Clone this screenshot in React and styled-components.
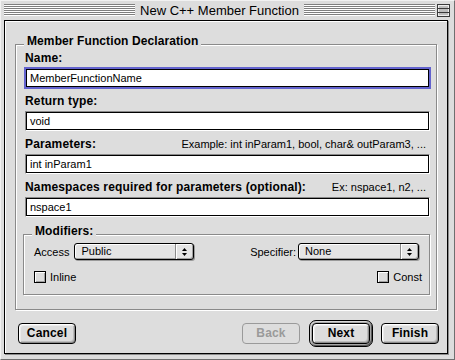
import React from 'react';
import styled, { createGlobalStyle, css } from 'styled-components';

const Global = createGlobalStyle`
  html, body { margin: 0; padding: 0; background: #dddddd; }
  * { box-sizing: border-box; }
`;

const SYS = `"Liberation Sans", Arial, sans-serif`;

const Window = styled.div`
  width: 455px;
  height: 360px;
  background: #dddddd;
  border: 1px solid;
  border-color: #f2f2f2 #6f6f6f #6f6f6f #f2f2f2;
  display: flex;
  flex-direction: column;
  font-family: ${SYS};
  color: #000;
  overflow: hidden;
`;

const TitleBar = styled.div`
  height: 19px;
  display: flex;
  align-items: flex-start;
  padding: 3px 4px 0 3px;
`;

const Stripes = styled.div`
  flex: 1;
  height: 12px;
  display: flex;
  justify-content: center;
  background: repeating-linear-gradient(to bottom, #7f7f7f 0 1px, #ffffff 1px 2px);
`;

const Title = styled.div`
  background: #dddddd;
  padding: 0 5px;
  font-size: 13px;
  line-height: 14px;
  height: 12px;
  white-space: nowrap;
`;

const ZoomBox = styled.svg`
  margin-left: 2px;
  display: block;
`;

const Content = styled.div`
  margin: 0 6px 0 3px;
  border: 1px solid #000;
  box-shadow: inset 1px 1px 0 #fff, 1px 1px 0 #8c8c8c;
  padding: 0 0 7px 0;
  display: flex;
  flex-direction: column;
`;

const Group = styled.div`
  margin: ${(p) => p.$margin};
  padding: ${(p) => p.$padding};
  border: 1px solid #8a8a8a;
  box-shadow: inset 1px 1px 0 #fff, 1px 1px 0 #fff;
  display: flex;
  flex-direction: column;
`;

const GroupTitle = styled.div`
  align-self: flex-start;
  margin: -11px 0 0 ${(p) => p.$x}px;
  padding: 0 3px;
  background: #dddddd;
  font-weight: bold;
  font-size: 12px;
  line-height: 14px;
  height: 14px;
  letter-spacing: 0.1px;
  white-space: nowrap;
`;

const LabelRow = styled.div`
  margin-top: ${(p) => p.$top}px;
  height: 14px;
  display: flex;
  justify-content: space-between;
  align-items: baseline;
  padding-right: 4px;
`;

const Label = styled.span`
  font-weight: bold;
  font-size: 12px;
  line-height: 14px;
  letter-spacing: 0.15px;
  white-space: nowrap;
`;

const Hint = styled.span`
  font-size: 11px;
  line-height: 14px;
  white-space: nowrap;
`;

const Field = styled.div`
  margin-top: 3px;
  height: 20px;
  border: 1px solid;
  border-color: #8a8a8a #ffffff #ffffff #8a8a8a;
  ${(p) =>
    p.$focus &&
    css`
      border-color: #6363ce;
      box-shadow: 0 0 0 1px #6363ce;
    `}
`;

const FieldText = styled.div`
  height: 100%;
  border: 1px solid #000;
  background: #fff;
  padding: 0 3px;
  font-size: 11px;
  line-height: 16px;
  white-space: nowrap;
  overflow: hidden;
`;

const Row = styled.div`
  margin-top: ${(p) => p.$top}px;
  padding: 0 ${(p) => p.$pr}px 0 ${(p) => p.$pl}px;
  display: flex;
  align-items: center;
  justify-content: space-between;
`;

const Pair = styled.div`
  display: flex;
  align-items: center;
  gap: ${(p) => p.$gap}px;
`;

const SmallText = styled.span`
  font-size: 11px;
  line-height: 14px;
  white-space: nowrap;
`;

const Popup = styled.div`
  width: ${(p) => p.$w}px;
  height: 17px;
  border: 1px solid #000;
  border-radius: 3px;
  background: #e4e4e4;
  box-shadow: inset 1px 1px 0 #fff, inset -1px -1px 0 #a0a0a0, 1px 1px 0 #9a9a9a;
  display: flex;
  align-items: stretch;
`;

const PopupText = styled.div`
  flex: 1;
  padding-left: 6px;
  font-size: 11px;
  line-height: 15px;
  white-space: nowrap;
`;

const PopupArrow = styled.div`
  width: 18px;
  border-left: 1px solid #8a8a8a;
  box-shadow: inset 1px 0 0 #fff;
  display: flex;
  align-items: center;
  justify-content: center;
`;

const CheckBox = styled.span`
  width: 12px;
  height: 12px;
  border: 1px solid #000;
  background: #dddddd;
  box-shadow: inset 1px 1px 0 #fff, inset -1px -1px 0 #a0a0a0;
`;

const ButtonRow = styled.div`
  margin-top: 10px;
  height: 26px;
  padding: 0 8px 0 13px;
  display: flex;
  align-items: center;
`;

const Spacer = styled.div`
  flex: 1;
`;

const Button = styled.div`
  width: 58px;
  height: 21px;
  border: 1px solid #000;
  border-radius: 4px;
  background: #dddddd;
  box-shadow: inset 1px 1px 0 #fff, inset -1px -1px 0 #8c8c8c, inset 2px 2px 0 #ececec,
    inset -2px -2px 0 #bcbcbc;
  display: flex;
  align-items: center;
  justify-content: center;
  font-weight: bold;
  font-size: 12px;
  line-height: 14px;
  letter-spacing: 0.15px;
  margin-left: ${(p) => p.$ml || 0}px;
  ${(p) =>
    p.$disabled &&
    css`
      border-color: #9a9a9a;
      color: #9a9a9a;
      box-shadow: none;
    `}
`;

const DefaultRing = styled.div`
  margin-left: ${(p) => p.$ml}px;
  border: 1px solid #000;
  border-radius: 7px;
  padding: 2px;
  background: #a6a6a6;
  box-shadow: inset 1px 1px 0 #d8d8d8, inset -1px -1px 0 #5a5a5a;
`;

const Arrows = () => (
  <svg width="5" height="8" viewBox="0 0 5 8">
    <polygon points="2.5,0 5,3 0,3" fill="#000" />
    <polygon points="0,5 5,5 2.5,8" fill="#000" />
  </svg>
);

export default function App() {
  return (
    <>
      <Global />
      <Window>
        <TitleBar>
          <Stripes>
            <Title>New C++ Member Function</Title>
          </Stripes>
          <ZoomBox width="13" height="13" viewBox="0 0 13 13">
            <rect x="0.5" y="0.5" width="12" height="12" fill="#bdbdbd" stroke="#3a3a3a" />
            <rect x="1.5" y="1.5" width="10" height="10" fill="none" stroke="#eeeeee" />
            <line x1="1" y1="4.5" x2="12" y2="4.5" stroke="#3a3a3a" />
            <line x1="1" y1="8.5" x2="12" y2="8.5" stroke="#3a3a3a" />
          </ZoomBox>
        </TitleBar>
        <Content>
          <Group $margin="23px 10px 0 10px" $padding="0 6px 14px 9px">
            <GroupTitle $x={-1}>Member Function Declaration</GroupTitle>
            <LabelRow $top={3}>
              <Label>Name:</Label>
            </LabelRow>
            <Field $focus>
              <FieldText>MemberFunctionName</FieldText>
            </Field>
            <LabelRow $top={6}>
              <Label>Return type:</Label>
            </LabelRow>
            <Field>
              <FieldText>void</FieldText>
            </Field>
            <LabelRow $top={6}>
              <Label>Parameters:</Label>
              <Hint>Example: int inParam1, bool, char&amp; outParam3, ...</Hint>
            </LabelRow>
            <Field>
              <FieldText>int inParam1</FieldText>
            </Field>
            <LabelRow $top={6}>
              <Label>Namespaces required for parameters (optional):</Label>
              <Hint>Ex: nspace1, n2, ...</Hint>
            </LabelRow>
            <Field>
              <FieldText>nspace1</FieldText>
            </Field>
            <Group $margin="17px 0 0 -2px" $padding="0 0 10px 0">
              <GroupTitle $x={8}>Modifiers:</GroupTitle>
              <Row $top={5} $pl={10} $pr={10}>
                <Pair $gap={5}>
                  <SmallText>Access</SmallText>
                  <Popup $w={120}>
                    <PopupText>Public</PopupText>
                    <PopupArrow>
                      <Arrows />
                    </PopupArrow>
                  </Popup>
                </Pair>
                <Pair $gap={2}>
                  <SmallText>Specifier:</SmallText>
                  <Popup $w={121}>
                    <PopupText>None</PopupText>
                    <PopupArrow>
                      <Arrows />
                    </PopupArrow>
                  </Popup>
                </Pair>
              </Row>
              <Row $top={10} $pl={10} $pr={7}>
                <Pair $gap={4}>
                  <CheckBox />
                  <SmallText>Inline</SmallText>
                </Pair>
                <Pair $gap={4}>
                  <CheckBox />
                  <SmallText>Const</SmallText>
                </Pair>
              </Row>
            </Group>
          </Group>
          <ButtonRow>
            <Button>Cancel</Button>
            <Spacer />
            <Button $disabled>Back</Button>
            <DefaultRing $ml={9}>
              <Button>Next</Button>
            </DefaultRing>
            <Button $ml={8}>Finish</Button>
          </ButtonRow>
        </Content>
      </Window>
    </>
  );
}
